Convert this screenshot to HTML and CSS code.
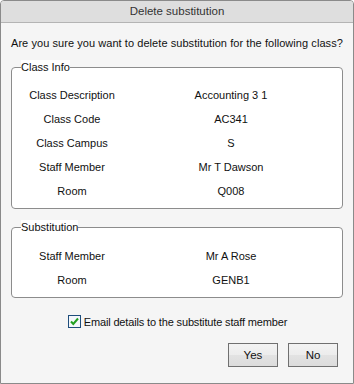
FILE: index.html
```html
<!DOCTYPE html>
<html lang="en">
<head>
    <meta charset="UTF-8">
    <title>Delete substitution</title>
    <link rel="stylesheet" href="styles.css">
</head>
<body>
    <div class="dialog">
        <div class="title-bar">Delete substitution</div>
        <p class="question">Are you sure you want to delete substitution for the following class?</p>

        <fieldset class="group">
            <legend>Class Info</legend>
            <div class="rows">
                <span>Class Description</span><span>Accounting 3 1</span>
                <span>Class Code</span><span>AC341</span>
                <span>Class Campus</span><span>S</span>
                <span>Staff Member</span><span>Mr T Dawson</span>
                <span>Room</span><span>Q008</span>
            </div>
        </fieldset>

        <fieldset class="group sub">
            <legend>Substitution</legend>
            <div class="rows">
                <span>Staff Member</span><span>Mr A Rose</span>
                <span>Room</span><span>GENB1</span>
            </div>
        </fieldset>

        <label class="check">
            <svg width="13" height="13" viewBox="0 0 13 13">
                <rect x="0.5" y="0.5" width="12" height="12" fill="#f4f7fb" stroke="#1e4d7b"/>
                <path d="M3 6.5 L5.3 9 L10 3.5" fill="none" stroke="#22a022" stroke-width="2"/>
            </svg>
            <span class="check-text">Email details to the substitute staff member</span>
        </label>

        <div class="buttons">
            <button>Yes</button>
            <button>No</button>
        </div>
    </div>
</body>
</html>
```

FILE: styles.css
```css
body {
    margin: 0;
    font-family: "Liberation Sans", Arial, sans-serif;
    font-size: 11px;
    color: #111;
}
.dialog {
    width: 352px;
    height: 382px;
    border: 1px solid #8a8a8a;
    border-radius: 4px 4px 0 0;
    background-color: #f5f5f5;
}
.title-bar {
    height: 21px;
    line-height: 21px;
    text-align: center;
    background-color: #dedede;
    border-bottom: 1px solid #b4b4b4;
    color: #333;
    font-size: 11.5px;
    border-radius: 3px 3px 0 0;
}
.question {
    margin: 13px 0 0 10px;
    line-height: 14px;
    white-space: nowrap;
    letter-spacing: 0.06px;
}
.group {
    margin: 10px 10px 0 10px;
    padding: 9px 0 5px 0;
    border: 1px solid #8c8c8c;
    border-radius: 4px;
    background-color: #fff;
}
.group legend {
    padding: 0;
    margin-left: 9px;
    line-height: 14px;
    background-color: #fff;
}
.sub {
    margin-top: 11px;
    padding-top: 10px;
}
.rows {
    display: grid;
    grid-template-columns: 120px 198px;
    grid-auto-rows: 24px;
    align-items: center;
    text-align: center;
}
.check {
    display: flex;
    align-items: center;
    justify-content: center;
    gap: 3px;
    margin-top: 17px;
    padding-left: 1px;
}
.check-text {
    letter-spacing: -0.15px;
}
.buttons {
    display: flex;
    justify-content: flex-end;
    gap: 10px;
    margin: 15px 15px 0 0;
}
.buttons button {
    width: 50px;
    height: 24px;
    font-family: inherit;
    font-size: 11.5px;
    color: #111;
    border: 1px solid #707070;
    border-radius: 0;
    background: linear-gradient(#f3f3f3 0%, #ececec 50%, #e2e2e2 51%, #dcdcdc 100%);
}
```
